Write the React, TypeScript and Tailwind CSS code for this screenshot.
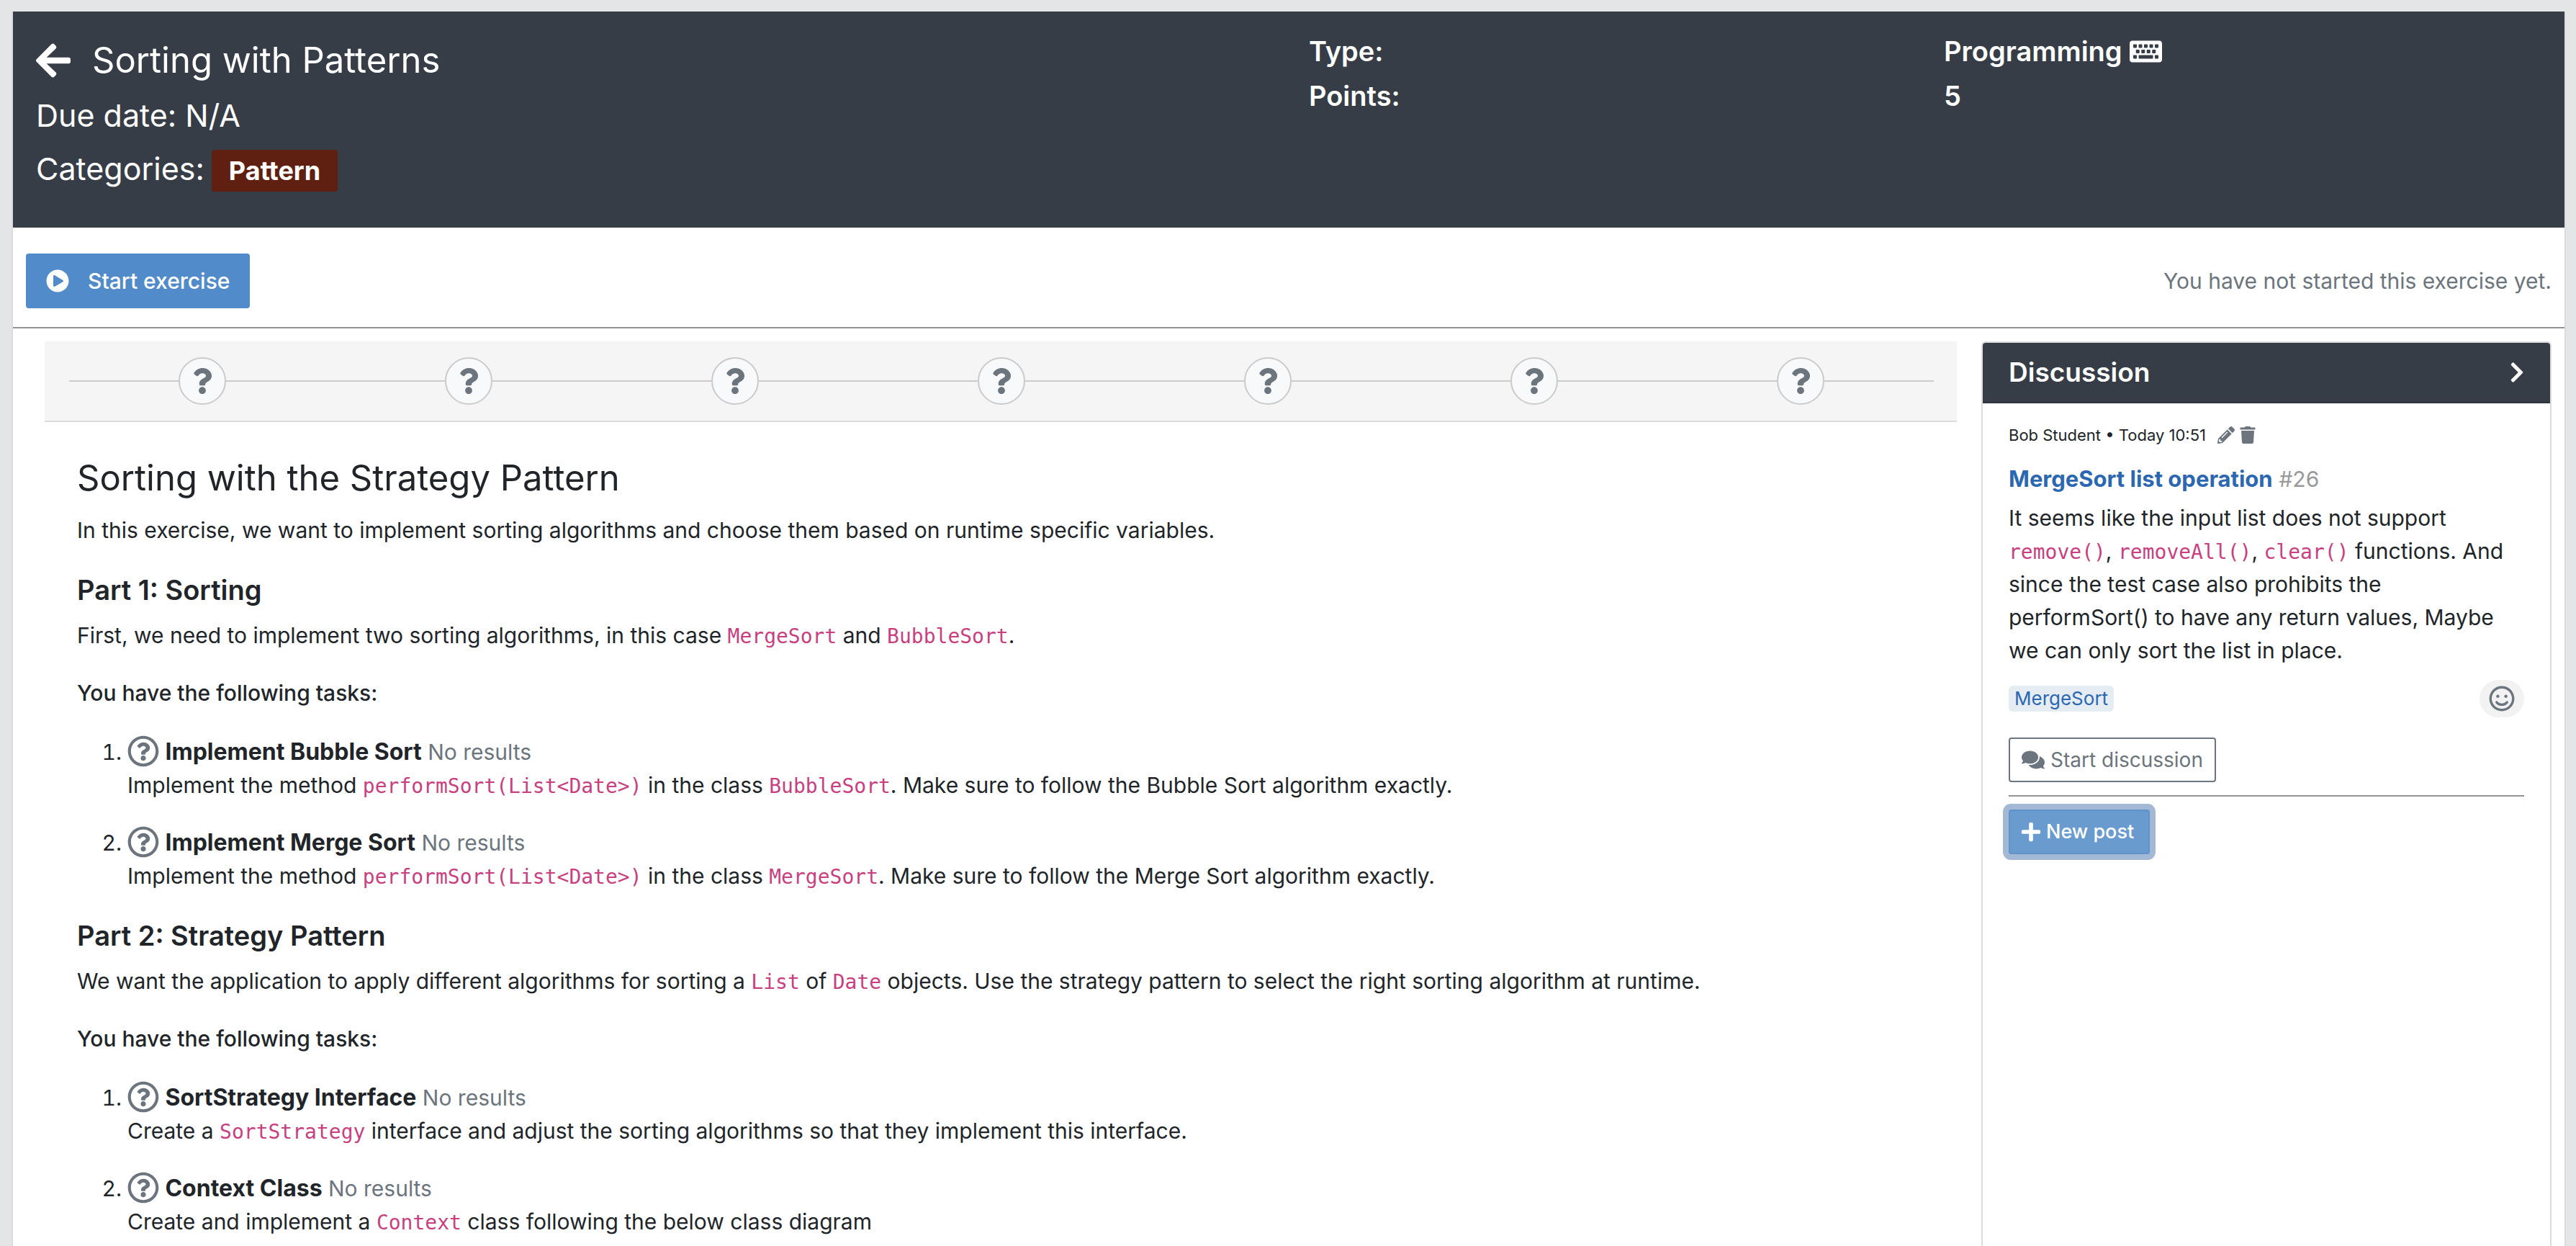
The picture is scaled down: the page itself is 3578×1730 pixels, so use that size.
import type { ReactNode } from 'react';
import {
  FaArrowLeft,
  FaChevronRight,
  FaComments,
  FaKeyboard,
  FaPencilAlt,
  FaPlayCircle,
  FaPlus,
  FaQuestion,
  FaRegQuestionCircle,
  FaRegSmile,
  FaTrash,
} from 'react-icons/fa';

function Code({ children }: { children: ReactNode }) {
  return <code className="font-['DejaVu_Sans_Mono',monospace] text-[28px] leading-none text-[#c93f80]">{children}</code>;
}

function Task({ title, children }: { title: string; children: ReactNode }) {
  return (
    <li className="leading-[46px]">
      <a href="#task" className="inline-block">
        <FaRegQuestionCircle className="-mt-2 inline-block size-11 align-middle text-[#6c757d]" />{' '}
        <strong className="text-[32px] font-bold">{title}</strong>
      </a>{' '}
      <span className="text-[#6c757d]">No results</span>
      <p>{children}</p>
    </li>
  );
}

function TaskList({ children }: { children: ReactNode }) {
  return <ol className="mt-9 list-decimal space-y-[34px] pl-[70px]">{children}</ol>;
}

function StepBar() {
  const steps = [1, 2, 3, 4, 5, 6, 7];
  return (
    <div className="flex h-28 items-center border-b-2 border-[#dcdcdc] bg-[#f5f5f5] pr-8 pl-[34px]">
      {steps.map((step) => (
        <div key={step} className="flex flex-1 items-center">
          <span className="h-0.5 flex-1 bg-[#cbcbcb]" />
          <button
            type="button"
            aria-label={`Task ${step}`}
            className="flex size-[66px] items-center justify-center rounded-full border-2 border-[#cbcbcb] bg-[#f8f9fb] text-[#6c757d]"
          >
            <FaQuestion className="size-9" />
          </button>
          <span className="h-0.5 flex-1 bg-[#cbcbcb]" />
        </div>
      ))}
    </div>
  );
}

function ExerciseHeader() {
  return (
    <header className="grid min-h-[300px] grid-cols-[884fr_441fr_415fr] bg-[#373d47] px-8 pt-6 pb-10 text-white">
      <div className="pt-3">
        <div className="flex items-center gap-[30px]">
          <a href="#back" aria-label="Back">
            <FaArrowLeft className="h-14 w-12" />
          </a>
          <h1 className="text-[49px] leading-[64px]">Sorting with Patterns</h1>
        </div>
        <p className="mt-4 text-[43px] leading-[56px]">Due date: N/A</p>
        <div className="mt-[18px] flex items-baseline gap-2.5 text-[43px] leading-[56px]">
          <span>Categories:</span>
          <span className="rounded bg-[#5f2012] px-6 text-[36px] leading-[58px] font-bold">Pattern</span>
        </div>
      </div>
      <div className="text-[38px] leading-[62px] font-semibold">
        <p>Type:</p>
        <p>Points:</p>
      </div>
      <div className="text-[38px] leading-[62px] font-semibold">
        <p className="flex items-center gap-2.5">
          Programming <FaKeyboard className="size-[45px]" />
        </p>
        <p>5</p>
      </div>
    </header>
  );
}

function Discussion() {
  return (
    <aside className="w-[792px] shrink-0 rounded-t-md border-2 border-b-0 border-[#dcdcdc]">
      <div className="flex h-[84px] items-center justify-between rounded-t border-b-2 border-[#2f333d] bg-[#373d47] px-9 text-white">
        <h2 className="text-[37px] font-semibold">Discussion</h2>
        <button type="button" aria-label="Collapse discussion">
          <FaChevronRight className="h-8 w-5" />
        </button>
      </div>
      <div className="px-9 pt-7">
        <div className="flex items-center text-[22px] leading-8">
          <span>Bob Student • Today 10:51</span>
          <button type="button" aria-label="Edit post" className="ml-4 text-[#6c757d]">
            <FaPencilAlt className="size-6" />
          </button>
          <button type="button" aria-label="Delete post" className="ml-1.5 text-[#6c757d]">
            <FaTrash className="size-6" />
          </button>
        </div>
        <h3 className="mt-[22px] text-[31px] leading-[46px]">
          <a href="#post" className="font-bold text-[#2c67b1]">
            MergeSort list operation
          </a>{' '}
          <span className="text-[30px] text-[#999999]">#26</span>
        </h3>
        <p className="mt-2 leading-[46px]">
          It seems like the input list does not support <Code>remove()</Code>, <Code>removeAll()</Code>, <Code>clear()</Code>{' '}
          functions. And since the test case also prohibits the performSort() to have any return values, Maybe we can only sort
          the list in place.
        </p>
        <div className="mt-[18px] flex items-center justify-between">
          <span className="rounded-md bg-[#e5ecf2] px-2 text-[26px] leading-9 text-[#2c67b1]">MergeSort</span>
          <button
            type="button"
            aria-label="Add reaction"
            className="flex h-[52px] w-[62px] items-center justify-center rounded-full bg-[#f2f2f2] text-[#6c757d]"
          >
            <FaRegSmile className="size-9" />
          </button>
        </div>
        <button
          type="button"
          className="mt-7 flex h-[62px] items-center gap-2 rounded border-2 border-[#6c757d] px-4 text-[28px] text-[#6c757d]"
        >
          <FaComments className="size-8" />
          Start discussion
        </button>
        <hr className="mt-[18px] border-t-2 border-[#939393]" />
        <button
          type="button"
          className="mt-[18px] flex h-[62px] items-center gap-1.5 rounded border-2 border-[#6093ca] bg-[#6a9bcf] pr-5 pl-3.5 text-[27px] font-medium text-white ring-8 ring-[#a2b8d4]"
        >
          <FaPlus className="size-[30px]" />
          New post
        </button>
      </div>
    </aside>
  );
}

export default function App() {
  return (
    <div className="flex min-h-screen flex-col bg-[#e4e5e6] pt-4 pr-3.5 pl-4 font-['Inter','Liberation_Sans',sans-serif] text-[30px] text-[#212529]">
      <div className="flex flex-1 flex-col border-x-2 border-[#dcdcde] bg-white">
        <ExerciseHeader />
        <div className="flex items-center justify-between border-b-2 border-[#939393] px-[18px] pt-9 pb-[26px]">
          <button
            type="button"
            className="flex h-[76px] items-center gap-[26px] rounded bg-[#528bc9] px-7 font-medium text-white"
          >
            <FaPlayCircle className="size-8" />
            Start exercise
          </button>
          <span className="text-[#6c757d]">You have not started this exercise yet.</span>
        </div>
        <div className="flex flex-1 gap-[34px] pt-[18px] pr-[18px] pl-11">
          <main className="min-w-0 flex-1">
            <StepBar />
            <article className="pt-11 pl-[45px] leading-[46px]">
              <h2 className="text-[49px] leading-[67px]">Sorting with the Strategy Pattern</h2>
              <p className="mt-4">
                In this exercise, we want to implement sorting algorithms and choose them based on runtime specific variables.
              </p>
              <h3 className="mt-9 text-[38px] leading-[48px] font-semibold">Part 1: Sorting</h3>
              <p className="mt-4">
                First, we need to implement two sorting algorithms, in this case <Code>MergeSort</Code> and{' '}
                <Code>BubbleSort</Code>.
              </p>
              <h4 className="mt-[34px] font-medium">You have the following tasks:</h4>
              <TaskList>
                <Task title="Implement Bubble Sort">
                  Implement the method <Code>{'performSort(List<Date>)'}</Code> in the class <Code>BubbleSort</Code>. Make sure
                  to follow the Bubble Sort algorithm exactly.
                </Task>
                <Task title="Implement Merge Sort">
                  Implement the method <Code>{'performSort(List<Date>)'}</Code> in the class <Code>MergeSort</Code>. Make sure to
                  follow the Merge Sort algorithm exactly.
                </Task>
              </TaskList>
              <h3 className="mt-9 text-[38px] leading-[48px] font-semibold">Part 2: Strategy Pattern</h3>
              <p className="mt-4">
                We want the application to apply different algorithms for sorting a <Code>List</Code> of <Code>Date</Code>{' '}
                objects. Use the strategy pattern to select the right sorting algorithm at runtime.
              </p>
              <h4 className="mt-[34px] font-medium">You have the following tasks:</h4>
              <TaskList>
                <Task title="SortStrategy Interface">
                  Create a <Code>SortStrategy</Code> interface and adjust the sorting algorithms so that they implement this
                  interface.
                </Task>
                <Task title="Context Class">
                  Create and implement a <Code>Context</Code> class following the below class diagram
                </Task>
              </TaskList>
            </article>
          </main>
          <Discussion />
        </div>
      </div>
    </div>
  );
}
